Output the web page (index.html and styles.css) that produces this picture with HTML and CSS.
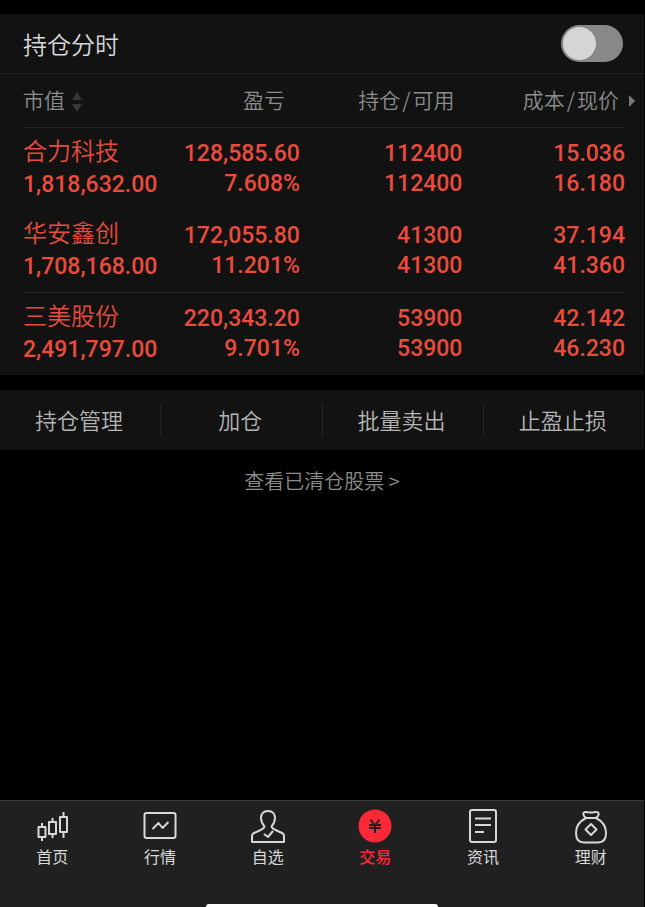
FILE: index.html
```html
<!DOCTYPE html>
<html lang="zh-CN">
<head>
    <meta charset="UTF-8">
    <meta name="viewport" content="width=device-width, initial-scale=1.0">
    <title>持仓</title>
    <link rel="stylesheet" href="styles.css">
</head>
<body>
    <main>
        <section class="holdings">
            <div class="switch-row">
                <label for="timeSwitch">持仓分时</label>
                <input type="checkbox" id="timeSwitch" class="switch">
            </div>
            <div class="table-wrap">
                <table class="stock-table">
                    <thead>
                        <tr>
                            <th class="col-value">市值<svg class="sort-icon" viewBox="0 0 12 20"><path d="M6 0l5 8H1zM6 20l5-8H1z"/></svg></th>
                            <th class="col-profit">盈亏</th>
                            <th class="col-amount">持仓<span class="slash">/</span>可用</th>
                            <th class="col-price">成本<span class="slash">/</span>现价<span class="more-arrow"></span></th>
                        </tr>
                    </thead>
                    <tbody>
                        <tr>
                            <td><span class="name">合力科技</span><span class="market">1,818,632.00</span></td>
                            <td><span>128,585.60</span><span>7.608%</span></td>
                            <td><span>112400</span><span>112400</span></td>
                            <td><span>15.036</span><span>16.180</span></td>
                        </tr>
                        <tr class="line">
                            <td><span class="name">华安鑫创</span><span class="market">1,708,168.00</span></td>
                            <td><span>172,055.80</span><span>11.201%</span></td>
                            <td><span>41300</span><span>41300</span></td>
                            <td><span>37.194</span><span>41.360</span></td>
                        </tr>
                        <tr>
                            <td><span class="name">三美股份</span><span class="market">2,491,797.00</span></td>
                            <td><span>220,343.20</span><span>9.701%</span></td>
                            <td><span>53900</span><span>53900</span></td>
                            <td><span>42.142</span><span>46.230</span></td>
                        </tr>
                    </tbody>
                </table>
            </div>
        </section>

        <div class="actions">
            <button type="button">持仓管理</button>
            <button type="button">加仓</button>
            <button type="button">批量卖出</button>
            <button type="button">止盈止损</button>
        </div>

        <a class="cleared-link" href="#">查看已清仓股票 &gt;</a>
    </main>

    <footer class="tab-bar">
        <nav>
            <a href="#">
                <svg viewBox="0 0 36 36">
                    <path d="M8 15v4M8 29v4M18.500 10v4M18.500 26v4M29.500 4v5M29.500 24v6"/>
                    <rect x="4.500" y="19" width="7" height="10"/>
                    <rect x="15" y="14" width="7" height="12"/>
                    <rect x="26" y="9" width="7" height="15"/>
                </svg>
                首页
            </a>
            <a href="#">
                <svg viewBox="0 0 36 36">
                    <rect x="2.500" y="5" width="31" height="25" rx="2"/>
                    <path d="M10.500 21l6-6 4 5 6-6"/>
                </svg>
                行情
            </a>
            <a href="#">
                <svg viewBox="0 0 36 36">
                    <path d="M18 3c-4.500 0-7 3-7 7 0 4 1.500 6 3.500 8.500-.500 2-2 2.500-4 3.500L4 25c-1.500.700-2 1.500-2 3v6h32v-6c0-1.500-.500-2.300-2-3l-6.500-3c-2-1-3.500-1.500-4-3.500C23.500 16 25 14 25 10c0-4-2.500-7-7-7z"/>
                    <path d="M14 26l4 3 5-6"/>
                </svg>
                自选
            </a>
            <a href="#" class="active">
                <svg viewBox="0 0 36 36">
                    <circle class="coin" cx="18" cy="18" r="16.500"/>
                    <path class="yen" d="M13.500 11.500l4.500 6 4.500-6M12 17h12M12 20h12M18 17v8"/>
                </svg>
                交易
            </a>
            <a href="#">
                <svg viewBox="0 0 36 36">
                    <rect x="5" y="2" width="26" height="32" rx="2"/>
                    <path d="M10 10.500h16M10 17h16M10 24h9"/>
                </svg>
                资讯
            </a>
            <a href="#">
                <svg viewBox="0 0 36 36">
                    <path d="M13 10l-2-2c-1.500-2-.500-4 1.500-4 2.500 0 3 .500 5.500.500s3-.500 5.500-.500c2 0 3 2 1.500 4l-2 2"/>
                    <path d="M13 10h10c6 3 10 8 10 15s-3 9.500-8 9.500H11c-5 0-8-2.500-8-9.500s4-12 10-15z"/>
                    <path d="M18 16l5.500 5.500-5.500 5.500-5.500-5.500z"/>
                </svg>
                理财
            </a>
        </nav>
        <div class="home-bar"></div>
    </footer>
</body>
</html>
```
FILE: styles.css
```css
* {
    box-sizing: border-box;
}

body {
    margin: 0;
    padding-right: 1px;
    min-height: 100vh;
    display: flex;
    flex-direction: column;
    background: #000;
    color: #d8d8d8;
    font-family: "Noto Sans CJK SC", sans-serif;
    font-weight: 350;
}

main {
    flex: 1;
    padding-top: 14px;
}

.holdings {
    background: #121212;
}

/* 分时开关 */
.switch-row {
    display: flex;
    justify-content: space-between;
    align-items: center;
    height: 60px;
    padding: 0 21px 1px 23px;
    border-bottom: 1px solid #242424;
    font-size: 24px;
}

.switch {
    appearance: none;
    width: 62px;
    height: 37px;
    margin: 0;
    padding: 2px;
    border-radius: 19px;
    background: #888;
    cursor: pointer;
}

.switch::before {
    content: "";
    display: block;
    width: 33px;
    height: 33px;
    border-radius: 50%;
    background: #d5d5d5;
}

.switch:checked::before {
    margin-left: auto;
}

/* 持仓列表 */
.table-wrap {
    padding: 0 19px 0 23px;
}

.stock-table {
    width: 100%;
    table-layout: fixed;
    border-collapse: separate;
    border-spacing: 0;
    text-align: right;
}

.stock-table th {
    height: 54px;
    padding: 0 0 3px;
    border-bottom: 1px solid #242424;
    color: #8c8c8c;
    font-size: 21px;
    font-weight: 350;
    text-align: right;
    white-space: nowrap;
}

.stock-table .col-value {
    width: 24%;
    text-align: left;
}

.stock-table .col-profit {
    width: 22%;
    padding-right: 15px;
}

.stock-table .col-amount {
    width: 27%;
    padding-right: 8px;
}

.stock-table .col-price {
    position: relative;
    width: 27%;
    padding-right: 6px;
}

.slash {
    margin: 0 2px;
}

.sort-icon {
    width: 12px;
    height: 20px;
    margin-left: 6px;
    vertical-align: middle;
    fill: #383838;
}

.more-arrow {
    position: absolute;
    top: 21px;
    right: -10px;
    border: 6px solid transparent;
    border-left-color: #777;
    border-right: 0;
}

.stock-table td {
    padding: 8px 0;
    color: #e94b3c;
    font-family: Roboto, "Noto Sans CJK SC", sans-serif;
    font-size: 23px;
    font-weight: 500;
    line-height: 30px;
    vertical-align: middle;
}

.stock-table td:first-child {
    text-align: left;
}

.stock-table td span {
    display: block;
}

.stock-table .name {
    margin-bottom: 4px;
    font-family: "Noto Sans CJK SC", sans-serif;
    font-size: 24px;
    font-weight: 350;
    line-height: 28px;
}

.stock-table .market {
    line-height: 34px;
}

.stock-table .line td {
    border-bottom: 1px solid #242424;
}

/* 操作按钮 */
.actions {
    display: flex;
    align-items: center;
    height: 60px;
    margin-top: 15px;
    background: #121212;
}

.actions button {
    flex: 1;
    height: 32px;
    padding: 0 2px 2px 0;
    border: none;
    background: none;
    color: #b4b4b4;
    font-family: inherit;
    font-size: 22px;
    font-weight: 350;
    line-height: 30px;
    cursor: pointer;
}

.actions button + button {
    border-left: 1px solid #242424;
}

.cleared-link {
    display: block;
    width: fit-content;
    margin: 16px auto;
    color: #8c8c8c;
    font-size: 20px;
    line-height: 30px;
    text-decoration: none;
}

/* 底部导航 */
.tab-bar {
    background: #202020;
    border-top: 1px solid #3a3a3a;
}

.tab-bar nav {
    display: flex;
    justify-content: space-between;
    height: 103px;
    padding: 7px 2px 0 1px;
}

.tab-bar a {
    width: 16%;
    display: flex;
    flex-direction: column;
    align-items: center;
    color: #d8d8d8;
    font-size: 16px;
    font-weight: 400;
    line-height: 24px;
    text-decoration: none;
}

.tab-bar svg {
    width: 36px;
    height: 36px;
    fill: none;
    stroke: #d8d8d8;
    stroke-width: 2;
    stroke-linejoin: round;
}

.tab-bar .active {
    color: #fb2937;
    font-weight: 500;
}

.tab-bar .coin {
    fill: #fb2937;
    stroke: none;
}

.tab-bar .yen {
    stroke: #202020;
}

.home-bar {
    width: 36%;
    height: 3px;
    margin: 0 auto;
    border-radius: 6px 6px 0 0;
    background: #fff;
}
```
